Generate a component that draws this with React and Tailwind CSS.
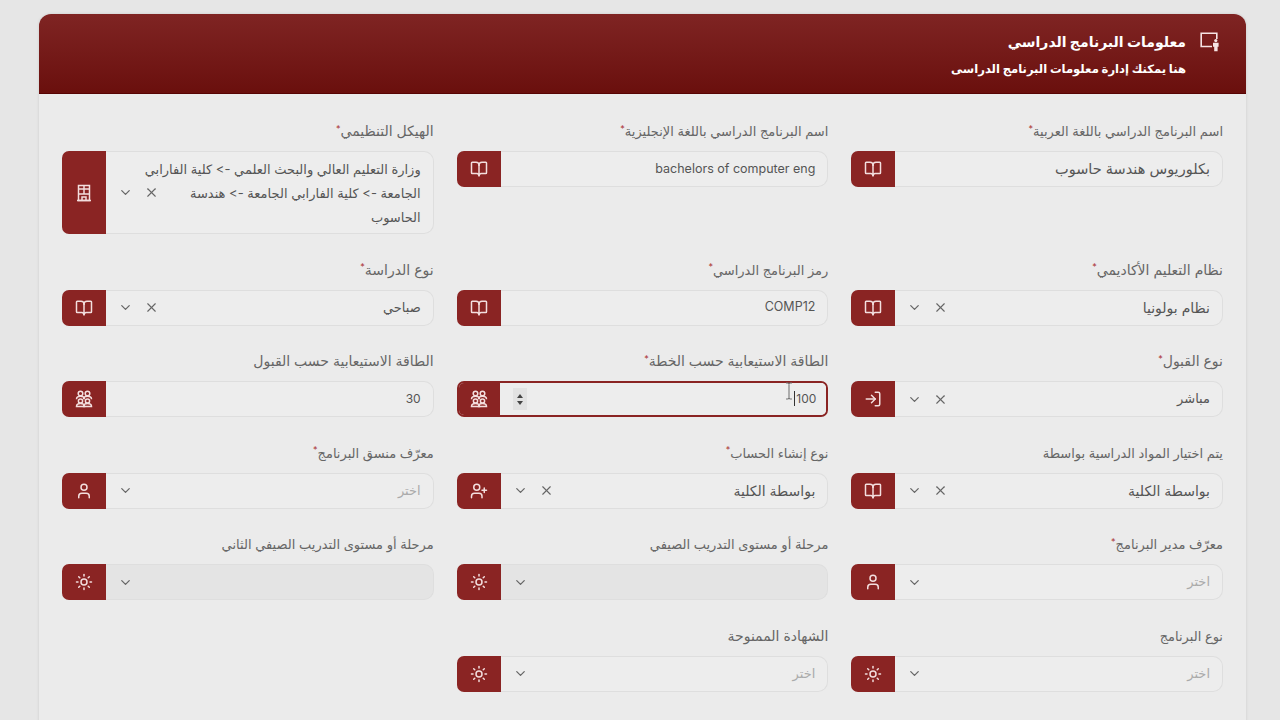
import React from "react";
import { BookOpen, ChevronDown, X, LogIn, User, UserPlus, Sun } from "lucide-react";

const Group = () => (
  <svg width="18" height="18" viewBox="0 0 18 18" fill="none" stroke="currentColor" strokeWidth="1.5">
    <circle cx="5.5" cy="3.5" r="2.3" />
    <circle cx="12.5" cy="3.5" r="2.3" />
    <path d="M1.5 9.2c0-2 1.6-3 4-3s4 1 4 3" />
    <path d="M8.5 9.2c0-2 1.6-3 4-3s4 1 4 3" />
    <circle cx="5.5" cy="11" r="2.1" />
    <circle cx="12.5" cy="11" r="2.1" />
    <path d="M1.5 16.6c0-2 1.6-3 4-3s4 1 4 3z" />
    <path d="M8.5 16.6c0-2 1.6-3 4-3s4 1 4 3z" />
  </svg>
);

const Office = () => (
  <svg width="16" height="18" viewBox="0 0 16 18" fill="none" stroke="currentColor" strokeWidth="1.5">
    <path d="M2.5 16.5V1.5h11v15z" />
    <path d="M1 16.5h14" />
    <path d="M6 16.5v-3.5h4v3.5" />
    <path d="M2.5 5h11M2.5 10h11M8 1.5V10" />
  </svg>
);

const HeaderIcon = () => (
  <svg width="20" height="20" viewBox="0 0 20 20" fill="none" className="text-[#f6e4e4]">
    <path d="M12 14.5H1.2V1.2h15.6V7" stroke="currentColor" strokeWidth="1.6" />
    <circle cx="15.8" cy="8.6" r="1.6" fill="currentColor" />
    <path d="M13 10.8h5.6v4h-1v4.4h-3.4v-4.4H13z" fill="currentColor" />
  </svg>
);

function Field({ label, req, sm, children }) {
  return (
    <div className="min-w-0">
      <label className={`mb-[10px] block h-5 leading-5 whitespace-nowrap text-[#666] ${sm ? "text-[13px]" : "text-[14px]"}`}>
        {label}
        {req && <sup className="text-[9px] leading-none text-[#a33]">*</sup>}
      </label>
      {children}
    </div>
  );
}

function Box({ Icon, children, tall, disabled, focused }) {
  return (
    <div
      className={`flex overflow-hidden rounded-[7px] ${tall ? "h-[83px]" : "h-[36px]"} ${
        focused ? "border-2 border-[#8a2423] bg-[#ededed]" : ""
      }`}
    >
      <div
        className={`flex min-w-0 flex-1 items-center text-[12.5px] text-[#555] ${
          focused ? "pr-[10px] pl-[12px]" : "rounded-r-[10px] border border-l-0 border-[#dedede] pr-3 pl-[12px]"
        } ${disabled ? "bg-[#e4e4e4]" : "bg-[#ededed]"}`}
      >
        {children}
      </div>
      <div className={`flex shrink-0 items-center justify-center bg-[#8a2423] text-[#f3dede] ${focused ? "w-[41px]" : "w-11"}`}>
        <Icon size={18} strokeWidth={2} />
      </div>
    </div>
  );
}

function Select({ value, placeholder, clear, Icon, tall, disabled, sm }) {
  return (
    <Box Icon={Icon} tall={tall} disabled={disabled}>
      <div
        className={`min-w-0 flex-1 ${tall ? "leading-6 whitespace-nowrap" : ""} ${
          value ? (sm ? "text-[13px]" : "text-[14px]") : "text-[13px] text-[#aaa]"
        }`}
      >
        {value || placeholder}
      </div>
      <div className="flex shrink-0 items-center gap-[11px] text-[#666]">
        {clear && <X size={15} strokeWidth={1.8} />}
        <ChevronDown size={15} strokeWidth={2} />
      </div>
    </Box>
  );
}

export default function App() {
  return (
    <div dir="rtl" className="h-screen overflow-hidden bg-[#e6e6e6] pt-[14px] pr-[34px] pl-[39px]" style={{ fontFamily: 'Inter, "DejaVu Sans", sans-serif' }}>
      <div className="rounded-t-[12px] bg-[#ebebeb] shadow-[0_0_3px_rgba(0,0,0,0.12)]">
        <header className="flex h-[80px] gap-[14px] rounded-t-[12px] border-b border-[#570404] bg-gradient-to-b from-[#7f2423] to-[#6a0f0d] pt-[17px] pr-[26px] text-white">
          <div className="pt-[1px]"><HeaderIcon /></div>
          <div>
            <h1 className="text-[14px] leading-[22px] font-bold">معلومات البرنامج الدراسي</h1>
            <p className="mt-[6px] text-[11.6px] leading-[20px] font-bold">هنا يمكنك إدارة معلومات البرنامج الدراسى</p>
          </div>
        </header>
        <div className="grid grid-cols-3 gap-x-[23px] gap-y-[25.5px] px-[23px] pt-[27px]">
          <Field sm label="اسم البرنامج الدراسي باللغة العربية" req>
            <Box Icon={BookOpen}><span className="text-[14.5px]">بكلوريوس هندسة حاسوب</span></Box>
          </Field>
          <Field sm label="اسم البرنامج الدراسي باللغة الإنجليزية" req>
            <Box Icon={BookOpen}>bachelors of computer eng</Box>
          </Field>
          <Field label="الهيكل التنظيمي" req>
            <Select
              tall
              sm
              clear
              Icon={Office}
              value={<>وزارة التعليم العالي والبحث العلمي -&gt; كلية الفارابي<br />الجامعة -&gt; كلية الفارابي الجامعة -&gt; هندسة<br />الحاسوب</>}
            />
          </Field>

          <Field label="نظام التعليم الأكاديمي" req>
            <Select clear Icon={BookOpen} value="نظام بولونيا" />
          </Field>
          <Field sm label="رمز البرنامج الدراسي" req>
            <Box Icon={BookOpen}>COMP12</Box>
          </Field>
          <Field label="نوع الدراسة" req>
            <Select sm clear Icon={BookOpen} value="صباحي" />
          </Field>

          <Field label="نوع القبول" req>
            <Select sm clear Icon={LogIn} value="مباشر" />
          </Field>
          <Field label="الطاقة الاستيعابية حسب الخطة" req>
            <div className="relative">
              <Box Icon={Group} focused>
                <div className="flex-1 text-[12px]">
                  <span className="border-l border-[#333] pl-px">100</span>
                </div>
                <div className="ml-[1px] flex h-[22px] w-[14px] shrink-0 flex-col items-center justify-center gap-[3px] bg-[#e2e2e2]">
                  <span className="h-0 w-0 border-x-[3.5px] border-b-[4px] border-x-transparent border-b-[#444]" />
                  <span className="h-0 w-0 border-x-[3.5px] border-t-[4px] border-x-transparent border-t-[#444]" />
                </div>
              </Box>
              <svg width="8" height="18" viewBox="0 0 8 18" fill="none" stroke="#777" strokeWidth="1.1" className="absolute top-[1px] left-[328px]">
                <path d="M1 1h2l1 1 1-1h2M4 2v14M1 17h2l1-1 1 1h2" />
              </svg>
            </div>
          </Field>
          <Field label="الطاقة الاستيعابية حسب القبول">
            <Box Icon={Group}><span className="text-[12px]">30</span></Box>
          </Field>

          <Field sm label="يتم اختيار المواد الدراسية بواسطة">
            <Select clear Icon={BookOpen} value="بواسطة الكلية" />
          </Field>
          <Field sm label="نوع إنشاء الحساب" req>
            <Select clear Icon={UserPlus} value="بواسطة الكلية" />
          </Field>
          <Field sm label="معرّف منسق البرنامج" req>
            <Select Icon={User} placeholder="اختر" />
          </Field>

          <Field sm label="معرّف مدير البرنامج" req>
            <Select Icon={User} placeholder="اختر" />
          </Field>
          <Field sm label="مرحلة أو مستوى التدريب الصيفي">
            <Select Icon={Sun} disabled />
          </Field>
          <Field sm label="مرحلة أو مستوى التدريب الصيفي الثاني">
            <Select Icon={Sun} disabled />
          </Field>

          <Field sm label="نوع البرنامج">
            <Select Icon={Sun} placeholder="اختر" />
          </Field>
          <Field label="الشهادة الممنوحة">
            <Select Icon={Sun} placeholder="اختر" />
          </Field>
          <div />

          <Field sm label="تاريخ اعتماد البرنامج الدراسي" req>
            <Box Icon={BookOpen} />
          </Field>
        </div>
      </div>
    </div>
  );
}
